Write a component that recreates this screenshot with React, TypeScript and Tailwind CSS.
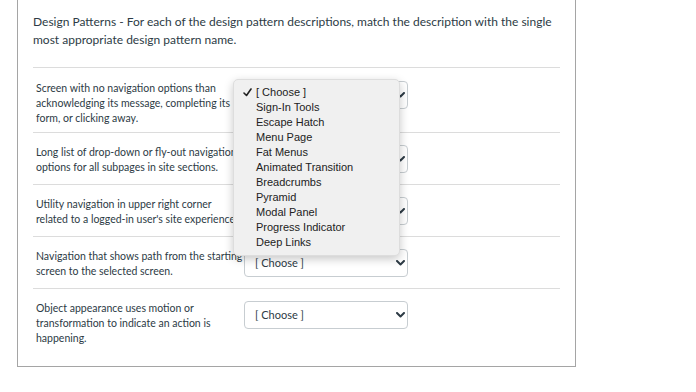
import { type ReactNode } from 'react';

const options = [
  '[ Choose ]',
  'Sign-In Tools',
  'Escape Hatch',
  'Menu Page',
  'Fat Menus',
  'Animated Transition',
  'Breadcrumbs',
  'Pyramid',
  'Modal Panel',
  'Progress Indicator',
  'Deep Links',
];

function Chevron() {
  return (
    <svg width="9" height="6" viewBox="0 0 9 6" className="text-[#2d3b45]">
      <path d="M1 1 L4.5 4.5 L8 1" fill="none" stroke="currentColor" strokeWidth="2" strokeLinecap="round" strokeLinejoin="round" />
    </svg>
  );
}

function Select() {
  return (
    <div className="flex h-[28px] w-[164px] shrink-0 items-center justify-between rounded-[4px] border border-[#c7cdd1] bg-white pl-[10px] pr-[2px] text-[11px] text-[#2d3b45]">
      <span>[ Choose ]</span>
      <Chevron />
    </div>
  );
}

function Row({ children, className, last }: { children: ReactNode; className?: string; last?: boolean }) {
  return (
    <div className={`flex items-start ${last ? '' : 'border-b border-[#dcdcdc]'} ${className ?? ''}`}>
      <div className="relative z-[1] w-[211px] shrink-0 whitespace-nowrap pl-[3px] text-[10.5px] leading-[15px] text-[#2d3b45]">
        {children}
      </div>
      <Select />
    </div>
  );
}

function Popup() {
  return (
    <div className="absolute left-[233px] top-[79px] z-10 w-[167px] rounded-[5px] border border-[#dddddd] bg-[#f0f0f0] py-[5px] shadow-[0_3px_10px_rgba(0,0,0,0.22)] font-['Liberation_Sans',Arial,sans-serif] text-[11px] leading-[15px] text-[#222]">
      {options.map((o, i) => (
        <div key={o} className="flex items-center">
          <span className="flex w-[22px] justify-end pr-[4px]">
            {i === 0 ? (
              <svg width="9" height="9" viewBox="0 0 9 9">
                <path d="M1 5 L3.5 7.5 L8 1" fill="none" stroke="#222" strokeWidth="1.6" strokeLinecap="round" strokeLinejoin="round" />
              </svg>
            ) : null}
          </span>
          <span>{o}</span>
        </div>
      ))}
    </div>
  );
}

export default function App() {
  return (
    <div className="relative h-[392px] w-[696px] bg-white font-['Lato','Noto_Sans',sans-serif]">
      <div className="ml-[17px] w-[559px] border-x border-b border-[#a5a5a5] px-[15px] pb-[20px]">
        <p className="pt-[13px] text-[12px] leading-[18px] text-[#2d3b45]">
          Design Patterns - For each of the design pattern descriptions, match the description with the single
          <br />
          most appropriate design pattern name.
        </p>
        <div className="mt-[18px] border-t border-[#dcdcdc]">
          <Row className="h-[65px] pt-[13px]">
            Screen with no navigation options than
            <br />
            acknowledging its message, completing its
            <br />
            form, or clicking away.
          </Row>
          <Row className="h-[52px] pt-[12px]">
            Long list of drop-down or fly-out navigation
            <br />
            options for all subpages in site sections.
          </Row>
          <Row className="h-[52px] pt-[12px]">
            Utility navigation in upper right corner
            <br />
            related to a logged-in user's site experience.
          </Row>
          <Row className="h-[52px] pt-[12px]">
            Navigation that shows path from the starting
            <br />
            screen to the selected screen.
          </Row>
          <Row className="pt-[12px]" last>
            Object appearance uses motion or
            <br />
            transformation to indicate an action is
            <br />
            happening.
          </Row>
        </div>
      </div>
      <Popup />
    </div>
  );
}
